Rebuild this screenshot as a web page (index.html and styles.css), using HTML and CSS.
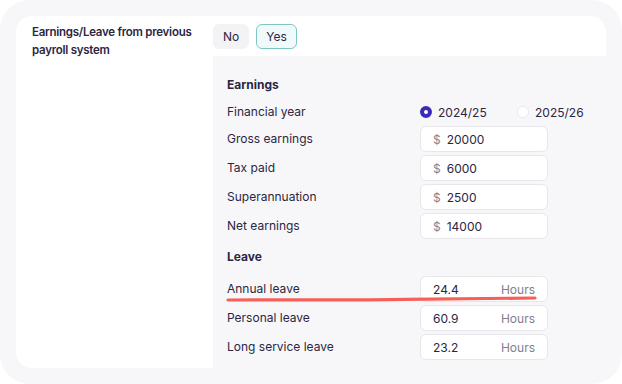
FILE: index.html
```html
<!DOCTYPE html>
<html lang="en">
<head>
    <meta charset="UTF-8">
    <meta name="viewport" content="width=device-width, initial-scale=1.0">
    <title>Previous payroll</title>
    <link rel="stylesheet" href="styles.css">
</head>
<body>
    <div class="frame">
        <div class="card">
            <div class="question">Earnings/Leave from previous payroll system</div>

            <div class="answer">
                <div class="toggle">
                    <button class="toggle-btn">No</button>
                    <button class="toggle-btn active">Yes</button>
                </div>

                <div class="panel">
                    <h3>Earnings</h3>

                    <div class="row year-row">
                        <span class="label">Financial year</span>
                        <div class="radios">
                            <label class="radio checked"><span class="dot"></span>2024/25</label>
                            <label class="radio"><span class="dot"></span>2025/26</label>
                        </div>
                    </div>
                    <div class="row">
                        <span class="label">Gross earnings</span>
                        <div class="field"><span class="prefix">$</span>20000</div>
                    </div>
                    <div class="row">
                        <span class="label">Tax paid</span>
                        <div class="field"><span class="prefix">$</span>6000</div>
                    </div>
                    <div class="row">
                        <span class="label">Superannuation</span>
                        <div class="field"><span class="prefix">$</span>2500</div>
                    </div>
                    <div class="row">
                        <span class="label">Net earnings</span>
                        <div class="field"><span class="prefix">$</span>14000</div>
                    </div>

                    <h3 class="leave-title">Leave</h3>

                    <div class="row">
                        <span class="label">Annual leave</span>
                        <div class="field hours">24.4<span class="suffix">Hours</span></div>
                        <!-- red marker under the row -->
                        <svg class="marker" width="312" height="8" viewBox="0 0 312 8">
                            <path d="M2 5 C 60 4.6, 120 5.4, 180 4.4 S 280 3.6, 309 3" fill="none" stroke="#f6605b" stroke-width="3.2" stroke-linecap="round"/>
                        </svg>
                    </div>
                    <div class="row">
                        <span class="label">Personal leave</span>
                        <div class="field hours">60.9<span class="suffix">Hours</span></div>
                    </div>
                    <div class="row">
                        <span class="label">Long service leave</span>
                        <div class="field hours">23.2<span class="suffix">Hours</span></div>
                    </div>
                </div>
            </div>
        </div>
    </div>
</body>
</html>
```

FILE: styles.css
```css
* {
    margin: 0;
    padding: 0;
    box-sizing: border-box;
}
body {
    background: #ffffff;
    font-family: 'Inter', 'Liberation Sans', sans-serif;
    font-size: 12px;
    color: #2b2642;
}
.frame {
    width: 622px;
    height: 384px;
    background: #f7f7fa;
    border-radius: 30px;
    padding: 16px;
}
.card {
    height: 352px;
    background: #ffffff;
    border-radius: 16px;
    display: grid;
    grid-template-columns: 197px 1fr;
    overflow: hidden;
}
.question {
    padding: 7px 4px 0 16px;
    font-size: 11.5px;
    font-weight: 600;
    line-height: 18px;
    letter-spacing: -0.25px;
}
.answer {
    display: flex;
    flex-direction: column;
    padding-top: 8px;
}
.toggle {
    display: flex;
    gap: 7px;
    margin-bottom: 7px;
}
.toggle-btn {
    height: 25px;
    padding: 0 9px;
    border: 1px solid #f3f3f6;
    border-radius: 6px;
    background: #f3f3f6;
    font-family: inherit;
    font-size: 12px;
    color: #2b2642;
}
.toggle-btn.active {
    padding: 0 9px;
    background: #f1fafa;
    border: 1.5px solid #80c6c2;
}
.panel {
    flex: 1;
    background: #f7f7fa;
    padding: 20px 58px 0 14px;
}
h3 {
    font-size: 12px;
    font-weight: 700;
    line-height: 18px;
    margin-bottom: 5px;
}
.leave-title {
    margin-top: 9px;
    margin-bottom: 10px;
}
.row {
    display: flex;
    align-items: center;
    justify-content: space-between;
    height: 26px;
    margin-bottom: 3px;
    position: relative;
}
.year-row {
    margin-bottom: 1px;
}
.label {
    line-height: 18px;
}
.radios {
    display: flex;
    width: 128px;
}
.radio {
    flex: none;
    display: flex;
    align-items: center;
    gap: 6px;
}
.radio.checked {
    width: 97px;
}
.dot {
    width: 12px;
    height: 12px;
    border-radius: 50%;
    background: #ffffff;
    border: 1px solid #ebebef;
}
.radio.checked .dot {
    border: 4px solid #3b2bb6;
}
.field {
    width: 128px;
    height: 26px;
    background: #ffffff;
    border: 1px solid #e6e6eb;
    border-radius: 6px;
    display: flex;
    align-items: center;
    padding: 0 12px;
}
.prefix {
    color: #85858f;
    margin-right: 6px;
}
.hours {
    justify-content: space-between;
}
.suffix {
    color: #80808b;
}
.marker {
    position: absolute;
    left: -1px;
    top: 19px;
}
```
